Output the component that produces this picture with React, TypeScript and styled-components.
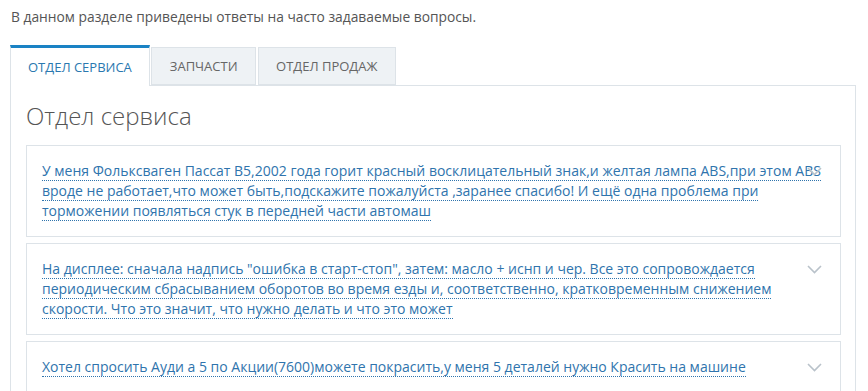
import React, { useState } from 'react'
import styled, { createGlobalStyle } from 'styled-components'

const GlobalStyle = createGlobalStyle`
    body {
        margin : 0;
        background : #fff;
        font-family : 'Open Sans', 'Liberation Sans', sans-serif;
    }
`

const Page = styled.div`
    padding : 7px 12px 0 10px;
`

const Intro = styled.p`
    margin : 0 0 18px 1px;
    font-size : 13.8px;
    line-height : 20px;
    color : #555;
`

const TabList = styled.div`
    display : flex;
    gap : 1.5px;
    align-items : flex-end;
`

const Tab = styled.button<{ $active?: boolean }>`
    font-family : inherit;
    font-size : 13px;
    text-transform : uppercase;
    padding : 0 ${p => p.$active ? '17px' : '17.5px'};
    height : ${p => p.$active ? '41px' : '38px'};
    margin-bottom : ${p => p.$active ? '-1px' : '0'};
    border : 1px solid #dde3e8;
    border-top : ${p => p.$active ? '3px solid #1a82c4' : '1px solid #dde3e8'};
    border-bottom : ${p => p.$active ? 'none' : '1px solid #dde3e8'};
    background : ${p => p.$active ? '#fff' : '#eef2f5'};
    color : ${p => p.$active ? '#2a78b0' : '#666'};
    cursor : pointer;
    position : relative;
    z-index : ${p => p.$active ? 1 : 0};
`

const Panel = styled.section`
    border : 1px solid #dde3e8;
    padding : 14px 14px 20px 15px;
`

const Heading = styled.h2`
    margin : 0 0 13px;
    font-size : 24px;
    line-height : 32px;
    font-weight : 300;
    color : #555;
`

const QuestionList = styled.div`
    display : flex;
    flex-direction : column;
    gap : 6px;
`

const Card = styled.div`
    position : relative;
    border : 1px solid #dde3e8;
    padding : 15px 18px 15px 15px;
    font-size : 14px;
    line-height : 20px;
`

const Question = styled.a`
    color : #2f74ad;
    text-decoration : none;
    border-bottom : 1px dotted #2f74ad;
    cursor : pointer;
`

const Chevron = styled.svg`
    position : absolute;
    z-index : 2;
    right : 18px;
    top : 21px;
    width : 15px;
    height : 9px;
`

const questions = [
    'У меня Фольксваген Пассат B5,2002 года горит красный восклицательный знак,и желтая лампа ABS,при этом ABS вроде не работает,что может быть,подскажите пожалуйста ,заранее спасибо! И ещё одна проблема при торможении появляться стук в передней части автомаш',
    'На дисплее: сначала надпись "ошибка в старт-стоп", затем: масло + иснп и чер. Все это сопровождается периодическим сбрасыванием оборотов во время езды и, соответственно, кратковременным снижением скорости. Что это значит, что нужно делать и что это может',
    'Хотел спросить Ауди а 5 по Акции(7600)можете покрасить,у меня 5 деталей нужно Красить на машине',
]

const tabs = ['Отдел сервиса', 'Запчасти', 'Отдел продаж']

const App = () => {
    const [active, setActive] = useState<number>(0)

    return (
        <Page>
            <GlobalStyle />
            <Intro>В данном разделе приведены ответы на часто задаваемые вопросы.</Intro>
            <TabList>
                {tabs.map((t, i) => (
                    <Tab key={t} $active={i === active} onClick={() => setActive(i)}>{t}</Tab>
                ))}
            </TabList>
            <Panel>
                <Heading>{tabs[active]}</Heading>
                <QuestionList>
                    {questions.map(q => (
                        <Card key={q}>
                            <Question>{q}</Question>
                            <Chevron viewBox="0 0 15 9">
                                <polyline points="1,1 7.5,7.5 14,1" fill="none" stroke="#b9c2ca" strokeWidth="1.6" />
                            </Chevron>
                        </Card>
                    ))}
                </QuestionList>
            </Panel>
        </Page>
    )
}

export default App
